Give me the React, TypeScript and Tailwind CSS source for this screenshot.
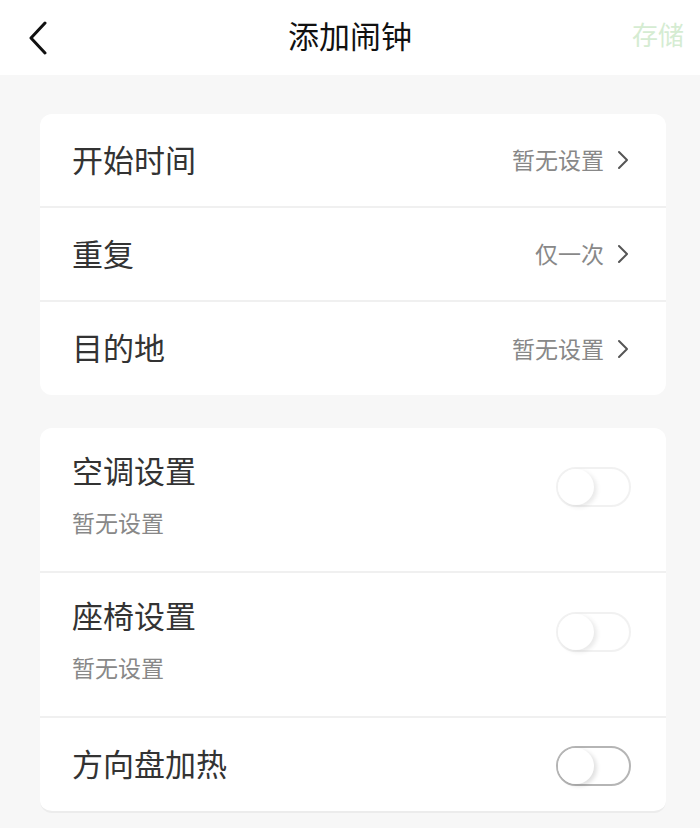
import React from "react";

const font = { fontFamily: '"Noto Sans CJK SC", "Noto Sans", sans-serif' };

function Chevron() {
  return (
    <svg width="12" height="20" viewBox="0 0 12 20" fill="none" className="ml-[13px]">
      <path d="M2 2l8 8-8 8" stroke="#555" strokeWidth="2" strokeLinecap="round" strokeLinejoin="round" />
    </svg>
  );
}

function Toggle({ faded }: { faded?: boolean }) {
  return (
    <div
      className={
        faded
          ? "relative w-[75px] h-[40px] rounded-full border-2 border-[#ececec] bg-white opacity-70"
          : "relative w-[75px] h-[40px] rounded-full border-2 border-[#b5b5b5] bg-white"
      }
    >
      <div className="absolute left-0 top-0 w-[36px] h-[36px] rounded-full bg-white shadow-[3px_2px_4px_rgba(0,0,0,0.12)]" />
    </div>
  );
}

function LinkRow({ label, value, last }: { label: string; value: string; last?: boolean }) {
  return (
    <div
      className={
        last
          ? "flex items-center h-[93px] pl-8 pr-[37px]"
          : "flex items-center h-[94px] pl-8 pr-[37px] border-b-2 border-[#f0f0f0]"
      }
    >
      <span className="-mt-[3px] text-[31px] leading-[40px] text-[#333]">{label}</span>
      <span className="ml-auto -mt-[2px] text-[23px] leading-[32px] text-[#888]">{value}</span>
      <Chevron />
    </div>
  );
}

function SwitchRow({ label, sub, faded, last }: { label: string; sub?: string; faded?: boolean; last?: boolean }) {
  if (!sub) {
    return (
      <div className={last ? "flex items-center h-[93px] pl-8 pr-[35px]" : "flex items-center h-[93px] pl-8 pr-[35px] border-b-2 border-[#f0f0f0]"}>
        <span className="-mt-[3px] text-[31px] leading-[40px] text-[#333]">{label}</span>
        <div className="ml-auto mt-[2px]">
          <Toggle faded={faded} />
        </div>
      </div>
    );
  }
  return (
    <div className="flex items-start h-[145px] pl-8 pr-[35px] border-b-2 border-[#f0f0f0]">
      <div className="flex flex-col pt-[22px]">
        <span className="text-[31px] leading-[40px] text-[#333]">{label}</span>
        <span className="mt-4 text-[23px] leading-[32px] text-[#888]">{sub}</span>
      </div>
      <div className="ml-auto mt-[39px]">
        <Toggle faded={faded} />
      </div>
    </div>
  );
}

export default function App() {
  return (
    <div className="w-[700px] h-[828px] bg-[#f7f7f7] overflow-hidden" style={font}>
      {/* header */}
      <div className="relative flex items-center justify-center h-[75px] bg-white">
        <svg width="22" height="34" viewBox="0 0 22 34" fill="none" className="absolute left-[27px] top-[21px]">
          <path d="M18 2L4 17l14 15" stroke="#111" strokeWidth="3" strokeLinecap="round" strokeLinejoin="round" />
        </svg>
        <span className="-mt-[5px] text-[31px] leading-[40px] text-[#111]">添加闹钟</span>
        <span className="absolute right-[16px] top-[16px] text-[26px] leading-[36px] text-[#d5ecd2]">存储</span>
      </div>

      <div className="flex flex-col gap-[33px] pt-[39px] pl-[40px] pr-[34px]">
        <div className="bg-white rounded-xl overflow-hidden">
          <LinkRow label="开始时间" value="暂无设置" />
          <LinkRow label="重复" value="仅一次" />
          <LinkRow label="目的地" value="暂无设置" last />
        </div>

        <div className="bg-white rounded-xl overflow-hidden border-b-2 border-[#ececec]">
          <SwitchRow label="空调设置" sub="暂无设置" faded />
          <SwitchRow label="座椅设置" sub="暂无设置" faded />
          <SwitchRow label="方向盘加热" last />
        </div>
      </div>
    </div>
  );
}
